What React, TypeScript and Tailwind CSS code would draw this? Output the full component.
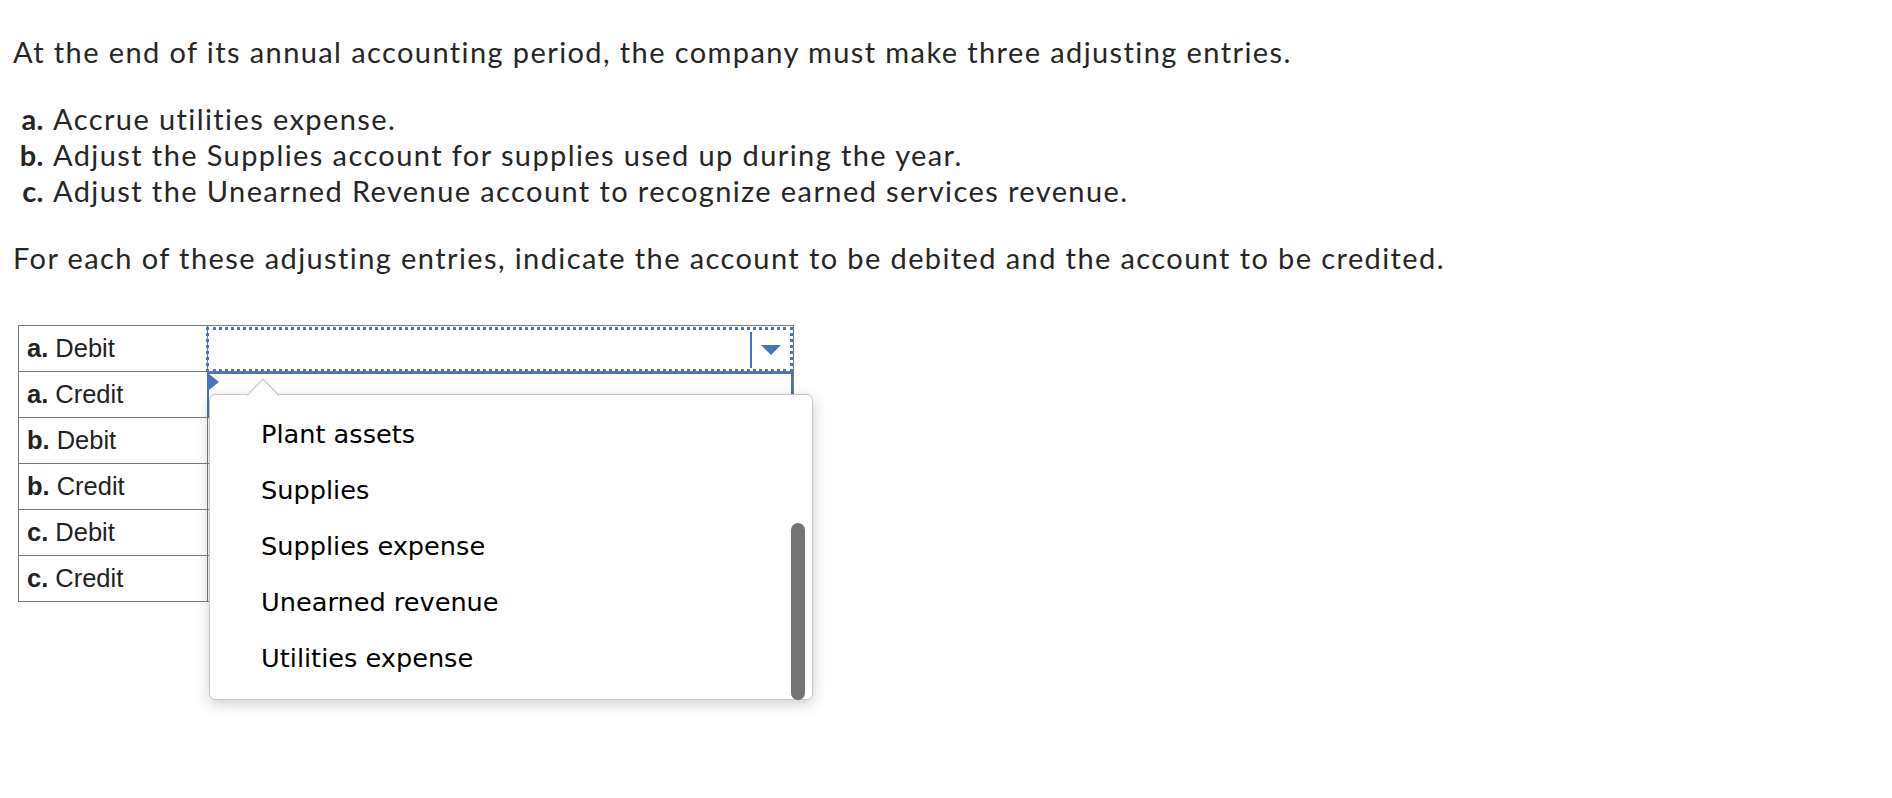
import React from "react";

const rows = [
  { letter: "a.", label: "Debit" },
  { letter: "a.", label: "Credit" },
  { letter: "b.", label: "Debit" },
  { letter: "b.", label: "Credit" },
  { letter: "c.", label: "Debit" },
  { letter: "c.", label: "Credit" },
];

const steps = [
  { letter: "a.", text: "Accrue utilities expense." },
  { letter: "b.", text: "Adjust the Supplies account for supplies used up during the year." },
  { letter: "c.", text: "Adjust the Unearned Revenue account to recognize earned services revenue." },
];

const options = ["Plant assets", "Supplies", "Supplies expense", "Unearned revenue", "Utilities expense"];

function OptionsPopup() {
  return (
    <div className="absolute left-[191px] top-[69px] z-10 h-[306px] w-[604px] rounded-[6px] border border-[#c6c6c6] bg-white shadow-[0_4px_14px_rgba(0,0,0,0.2)]">
      {/* caret notch */}
      <svg className="absolute left-[37px] top-[-17px]" width="32" height="18" viewBox="0 0 32 18">
        <path d="M0 17.5 L16 1 L32 17.5" fill="white" stroke="#c6c6c6" strokeWidth="1.2" />
      </svg>
      <ul className="pt-[11px] pl-[51px] font-['DejaVu_Sans',Verdana,sans-serif] text-[25.6px] text-black">
        {options.map((o) => (
          <li key={o} className="h-[56px] leading-[56px]">
            {o}
          </li>
        ))}
      </ul>
      <div className="absolute right-[7px] top-[128px] h-[177px] w-[14px] rounded-full bg-[#737373]" />
    </div>
  );
}

export default function App() {
  return (
    <div className="h-[798px] w-full bg-white text-[#262626]">
      <div className="pl-[13px] pt-[34px] font-['Lato',sans-serif] text-[29px] leading-[36px] tracking-[1.4px] [font-variant-ligatures:none]">
        <p>At the end of its annual accounting period, the company must make three adjusting entries.</p>

        <ul className="mt-[31px]">
          {steps.map((s) => (
            <li key={s.letter} className="flex">
              <span className="mr-[9px] w-[31px] text-right font-bold tracking-[0.5px]">{s.letter}</span>
              <span>{s.text}</span>
            </li>
          ))}
        </ul>

        <p className="mt-[31px]">
          For each of these adjusting entries, indicate the account to be debited and the account to be credited.
        </p>
      </div>

      {/* answer table */}
      <div className="relative ml-[18px] mt-[49px] flex w-fit">
        <div className="w-[190px] border-x border-t border-[#7a7a7a] font-['Liberation_Sans',Arial,sans-serif] text-[25.5px] text-[#222]">
          {rows.map((r, i) => (
            <div key={i} className="flex h-[46px] items-center border-b border-[#7a7a7a] pl-[8px]">
              <span className="mr-[7px] font-bold">{r.letter}</span>
              <span>{r.label}</span>
            </div>
          ))}
        </div>

        <div className="w-[586px] border-r border-t border-[#7a7a7a]">
          {/* focused select, dotted ring */}
          <div className="flex h-[46px] items-stretch border-b border-[#7a7a7a]">
            <div className="ml-[-2px] mt-[1px] flex h-[45px] flex-1 items-center justify-end border-[3px] border-dotted border-[#4774bd]">
              <div className="h-[36px] w-[2px] bg-[#4774bd]" />
              <div className="flex w-[38px] justify-center">
                <div className="h-0 w-0 border-x-[10px] border-t-[10px] border-x-transparent border-t-[#4774bd]" />
              </div>
            </div>
          </div>

          {/* open select */}
          <div className="relative ml-[-1px] h-[46px] border-2 border-[#4774bd]">
            <div className="absolute left-0 top-0 h-0 w-0 border-y-[8px] border-l-[10px] border-y-transparent border-l-[#4774bd]" />
          </div>

          {rows.slice(2).map((_, i) => (
            <div key={i} className="h-[46px] border-b border-[#7a7a7a]" />
          ))}
        </div>

        <OptionsPopup />
      </div>
    </div>
  );
}
